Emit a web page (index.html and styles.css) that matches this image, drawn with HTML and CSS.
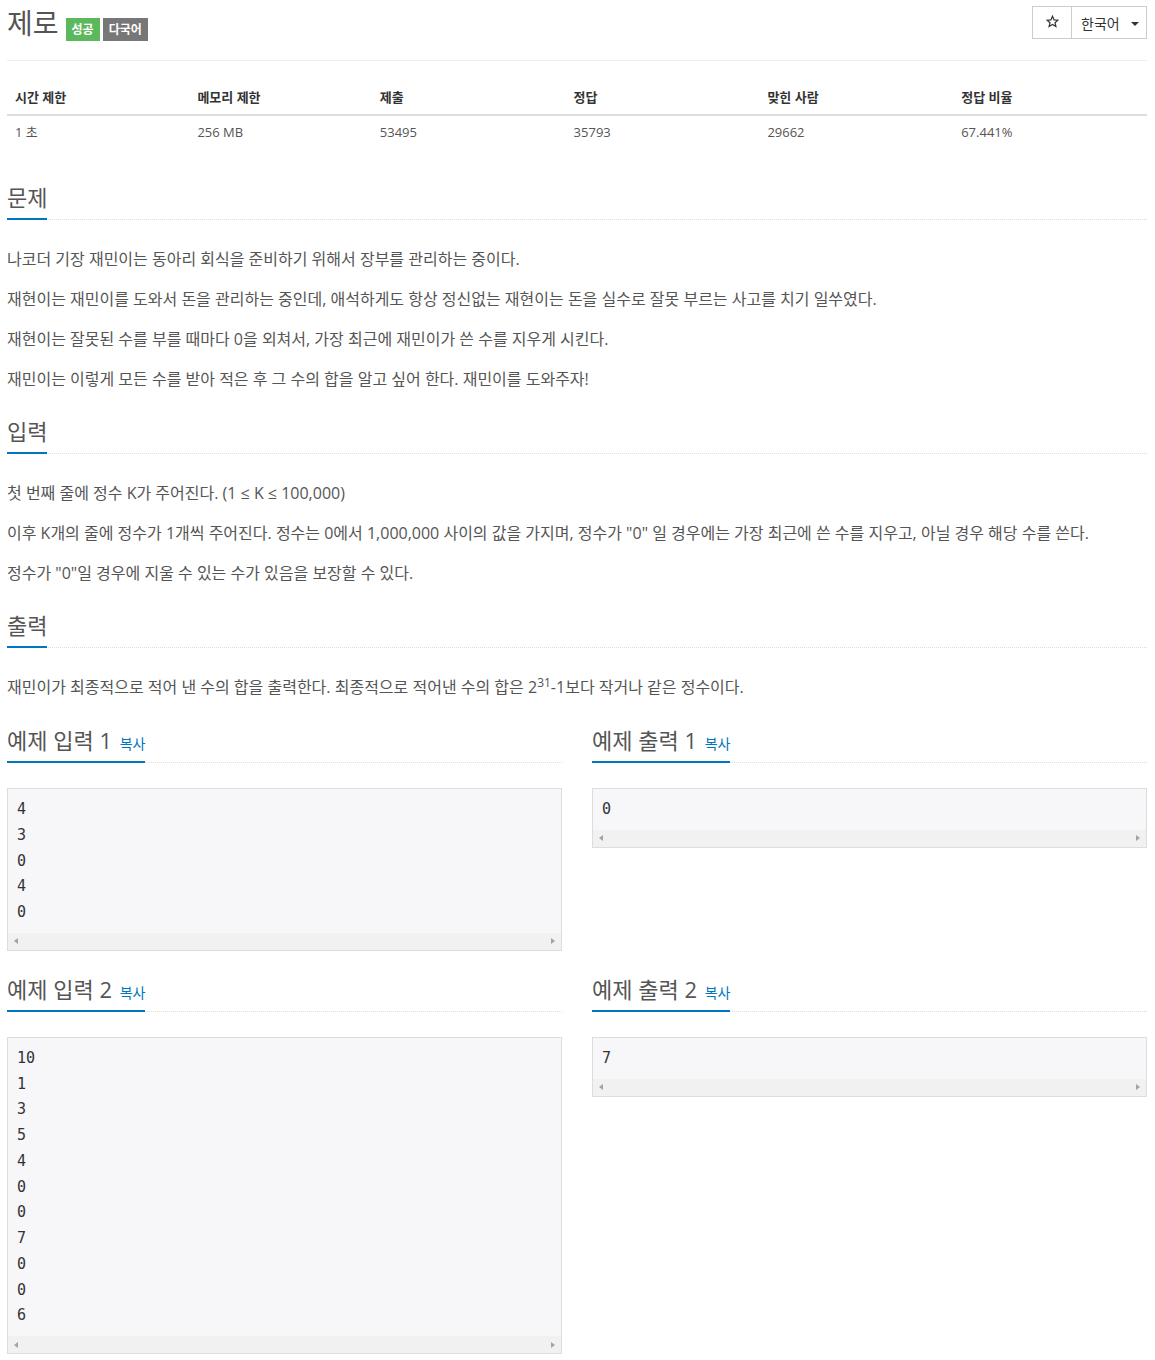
FILE: index.html
```html
<!DOCTYPE html>
<html lang="ko">
<head>
<meta charset="utf-8">
<title>제로</title>
<link rel="stylesheet" href="styles.css">
</head>
<body>
<div class="container">
  <div class="page-header">
    <h1 class="title">
      <span class="title-text">제로</span>
      <span class="label label-success">성공</span>
      <span class="label label-default">다국어</span>
    </h1>
    <div class="btn-group">
      <button class="btn btn-star" type="button" aria-label="즐겨찾기">
        <svg class="star" width="13" height="13" viewBox="0 0 24 24" aria-hidden="true"><path d="M12 2.2 L14.9 8.9 L22.1 9.5 L16.6 14.3 L18.3 21.4 L12 17.6 L5.7 21.4 L7.4 14.3 L1.9 9.5 L9.1 8.9 Z" fill="none" stroke="#333" stroke-width="2.2" stroke-linejoin="miter"/></svg>
      </button>
      <button class="btn btn-lang" type="button">한국어<span class="caret"></span></button>
    </div>
  </div>

  <table class="info">
    <thead>
      <tr>
        <th class="w16">시간 제한</th>
        <th class="w16">메모리 제한</th>
        <th class="w17">제출</th>
        <th class="w17">정답</th>
        <th class="w17">맞힌 사람</th>
        <th class="w17">정답 비율</th>
      </tr>
    </thead>
    <tbody>
      <tr>
        <td>1 초</td>
        <td>256 MB</td>
        <td>53495</td>
        <td>35793</td>
        <td>29662</td>
        <td>67.441%</td>
      </tr>
    </tbody>
  </table>

  <section class="section">
    <div class="headline"><h2>문제</h2></div>
    <div class="problem-text">
      <p>나코더 기장 재민이는 동아리 회식을 준비하기 위해서 장부를 관리하는 중이다.</p>
      <p>재현이는 재민이를 도와서 돈을 관리하는 중인데, 애석하게도 항상 정신없는 재현이는 돈을 실수로 잘못 부르는 사고를 치기 일쑤였다.</p>
      <p>재현이는 잘못된 수를 부를 때마다 0을 외쳐서, 가장 최근에 재민이가 쓴 수를 지우게 시킨다.</p>
      <p>재민이는 이렇게 모든 수를 받아 적은 후 그 수의 합을 알고 싶어 한다. 재민이를 도와주자!</p>
    </div>
  </section>

  <section class="section">
    <div class="headline"><h2>입력</h2></div>
    <div class="problem-text">
      <p>첫 번째 줄에 정수 K가 주어진다. (1 ≤ K ≤ 100,000)</p>
      <p>이후 K개의 줄에 정수가 1개씩 주어진다. 정수는 0에서 1,000,000 사이의 값을 가지며, 정수가 "0" 일 경우에는 가장 최근에 쓴 수를 지우고, 아닐 경우 해당 수를 쓴다.</p>
      <p>정수가 "0"일 경우에 지울 수 있는 수가 있음을 보장할 수 있다.</p>
    </div>
  </section>

  <section class="section">
    <div class="headline"><h2>출력</h2></div>
    <div class="problem-text">
      <p>재민이가 최종적으로 적어 낸 수의 합을 출력한다. 최종적으로 적어낸 수의 합은 2<sup>31</sup>-1보다 작거나 같은 정수이다.</p>
    </div>
  </section>

  <div class="samples">
    <section class="sample">
      <div class="headline sample-headline"><h2>예제 입력 1 <a class="copy" href="#">복사</a></h2></div>
      <div class="sample-box">
        <pre class="sampledata">4
3
0
4
0</pre>
        <div class="hscroll"><span class="arr arr-left"></span><span class="arr arr-right"></span></div>
      </div>
    </section>
    <section class="sample">
      <div class="headline sample-headline"><h2>예제 출력 1 <a class="copy" href="#">복사</a></h2></div>
      <div class="sample-box">
        <pre class="sampledata">0</pre>
        <div class="hscroll"><span class="arr arr-left"></span><span class="arr arr-right"></span></div>
      </div>
    </section>
    <section class="sample">
      <div class="headline sample-headline"><h2>예제 입력 2 <a class="copy" href="#">복사</a></h2></div>
      <div class="sample-box">
        <pre class="sampledata">10
1
3
5
4
0
0
7
0
0
6</pre>
        <div class="hscroll"><span class="arr arr-left"></span><span class="arr arr-right"></span></div>
      </div>
    </section>
    <section class="sample">
      <div class="headline sample-headline"><h2>예제 출력 2 <a class="copy" href="#">복사</a></h2></div>
      <div class="sample-box">
        <pre class="sampledata">7</pre>
        <div class="hscroll"><span class="arr arr-left"></span><span class="arr arr-right"></span></div>
      </div>
    </section>
  </div>
</div>
</body>
</html>
```

FILE: styles.css
```css
* {
  box-sizing: border-box;
}

html, body {
  margin: 0;
  padding: 0;
  background: #fff;
}

body {
  font-family: "Open Sans", "Noto Sans CJK KR", sans-serif;
  font-size: 14px;
  line-height: 1.42857;
  color: #555;
  padding: 0 8px 0 7px;
}

.container {
  width: 1140px;
}

/* ---------- header ---------- */
.page-header {
  display: flex;
  justify-content: space-between;
  align-items: flex-start;
  border-bottom: 1px solid #eee;
  padding-bottom: 19px;
}

.title {
  display: flex;
  align-items: flex-start;
  height: 33px;
  margin: 8px 0 0 0;
  font-weight: 400;
  font-size: 28px;
  line-height: 30px;
  color: #555;
}

.title-text {
  margin-right: 7px;
}

.label {
  display: inline-block;
  margin-top: 10px;
  padding: 5px 6px;
  font-size: 12px;
  line-height: 13px;
  font-weight: 700;
  color: #fff;
}

.label + .label {
  margin-left: 3px;
}

.label-success {
  background: #5cb85c;
}

.label-default {
  background: #777;
}

.btn-group {
  display: flex;
  margin-top: 6px;
}

.btn {
  display: flex;
  align-items: center;
  height: 33px;
  margin: 0;
  padding: 0;
  background: #fff;
  border: 1px solid #ccc;
  color: #333;
  font-family: "Open Sans", "Noto Sans CJK KR", sans-serif;
  font-size: 14px;
  cursor: pointer;
}

.btn-star {
  width: 40px;
  justify-content: center;
}

.star {
  display: block;
  margin-top: -2px;
}

.btn-lang {
  width: 76px;
  margin-left: -1px;
  padding-left: 9px;
}

.caret {
  display: inline-block;
  width: 0;
  height: 0;
  margin-left: 11px;
  margin-top: 2px;
  border-top: 4px solid #333;
  border-left: 4px solid transparent;
  border-right: 4px solid transparent;
}

/* ---------- info table ---------- */
.info {
  width: 100%;
  margin: 19px 0 36px 0;
  border-collapse: collapse;
  font-size: 13px;
  line-height: 18.6px;
}

.info th {
  text-align: left;
  font-weight: 700;
  color: #333;
  padding: 8px 8px 7px 8px;
  border-bottom: 2px solid #ddd;
}

.info td {
  padding: 7px 8px 8px 8px;
  color: #555;
}

.w16 { width: 16%; }
.w17 { width: 17%; }

/* ---------- sections ---------- */
.section {
  margin-top: 25px;
}

.headline {
  display: flex;
  border-bottom: 1px dotted #ddd;
  margin-bottom: 24px;
}

.headline h2 {
  height: 35px;
  margin: 0 0 -1px 0;
  padding-bottom: 9px;
  border-bottom: 2px solid #0076c0;
  font-size: 22px;
  line-height: 24px;
  font-weight: 400;
  color: #555;
  white-space: nowrap;
}

.problem-text p {
  margin: 0 0 10px 0;
  font-size: 16px;
  line-height: 30px;
  color: #555;
}

sup {
  font-size: 75%;
  line-height: 0;
  position: relative;
  vertical-align: baseline;
  top: -0.5em;
}

/* ---------- samples ---------- */
.samples {
  display: grid;
  grid-template-columns: 1fr 1fr;
  column-gap: 30px;
  row-gap: 26px;
  align-items: start;
  margin-top: 26px;
}

.sample-headline {
  margin-bottom: 25px;
}

.copy {
  font-size: 14px;
  color: #0076c0;
  text-decoration: none;
  margin-left: 2px;
}

.sample-box {
  border: 1px solid #ddd;
  background: #f7f7f9;
}

.sampledata {
  margin: 0;
  padding: 8px 9px 7px 9px;
  font-family: "DejaVu Sans Mono", monospace;
  font-size: 15px;
  line-height: 25.75px;
  color: #333;
  white-space: pre;
}

.hscroll {
  display: flex;
  justify-content: space-between;
  align-items: center;
  height: 17px;
  background: #f1f1f1;
  padding: 0 6px;
}

.arr {
  width: 0;
  height: 0;
  border-top: 3.5px solid transparent;
  border-bottom: 3.5px solid transparent;
}

.arr-left {
  border-right: 4px solid #a3a3a3;
}

.arr-right {
  border-left: 4px solid #a3a3a3;
}
```
